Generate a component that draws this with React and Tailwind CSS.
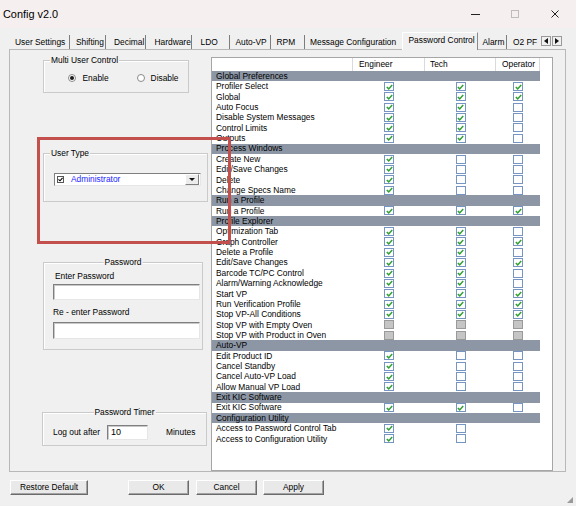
import React from 'react';

// permission matrix: 1 = checked, 0 = empty, g = disabled, - = no box
const sections = [
  {
    title: 'Global Preferences',
    rows: [
      ['Profiler Select', '111'],
      ['Global', '111'],
      ['Auto Focus', '110'],
      ['Disable System Messages', '110'],
      ['Control Limits', '110'],
      ['Outputs', '110'],
    ],
  },
  {
    title: 'Process Windows',
    rows: [
      ['Create New', '100'],
      ['Edit/Save Changes', '100'],
      ['Delete', '100'],
      ['Change Specs Name', '100'],
    ],
  },
  { title: 'Run a Profile', rows: [['Run a Profile', '111']] },
  {
    title: 'Profile Explorer',
    rows: [
      ['Optimization Tab', '110'],
      ['Graph Controller', '111'],
      ['Delete a Profile', '110'],
      ['Edit/Save Changes', '111'],
      ['Barcode TC/PC Control', '110'],
      ['Alarm/Warning Acknowledge', '110'],
      ['Start VP', '111'],
      ['Run Verification Profile', '111'],
      ['Stop VP-All Conditions', '111'],
      ['Stop VP with Empty Oven', 'ggg'],
      ['Stop VP with Product in Oven', 'ggg'],
    ],
  },
  {
    title: 'Auto-VP',
    rows: [
      ['Edit Product ID', '100'],
      ['Cancel Standby', '100'],
      ['Cancel Auto-VP Load', '100'],
      ['Allow Manual VP Load', '100'],
    ],
  },
  { title: 'Exit KIC Software', rows: [['Exit KIC Software', '110']] },
  {
    title: 'Configuration Utility',
    rows: [
      ['Access to Password Control Tab', '10-'],
      ['Access to Configuration Utility', '10-'],
    ],
  },
];

const tabs = [
  { label: 'User Settings', w: 'w-[60px]', pl: 'pl-[5px]' },
  { label: 'Shifting', w: 'w-[35.5px]', pl: 'pl-[6px]' },
  { label: 'Decimal', w: 'w-[40.5px]', pl: 'pl-[8.5px]' },
  { label: 'Hardware', w: 'w-[46px]', pl: 'pl-[8.5px]' },
  { label: 'LDO', w: 'w-[38px]', pl: 'pl-[8.5px]' },
  { label: 'Auto-VP', w: 'w-[40.5px]', pl: 'pl-[5.5px]' },
  { label: 'RPM', w: 'w-[34px]', pl: 'pl-[6px]' },
  { label: 'Message Configuration', w: 'w-[97.5px]', pl: 'pl-[5.5px]', noSep: true },
];

const Check = ({ v }) => {
  if (v === '-') return null;
  if (v === 'g') {
    return <span className="block w-[10px] h-[9px] border border-[#9a9a9a] bg-[#c5c5c5]" />;
  }
  return (
    <span className="flex items-center justify-center w-[10px] h-[9px] border border-[#7795c3] bg-white">
      {v === '1' && (
        <svg width="7" height="6" viewBox="0 0 7 6">
          <path d="M0.8 3 L2.7 4.9 L6.2 1" stroke="#33a033" strokeWidth="1.5" fill="none" />
        </svg>
      )}
    </span>
  );
};

const GroupBox = ({ label, center, className, children }) => (
  <div className={`relative border border-[#cacaca] shadow-[inset_1px_1px_0_#ffffff] ${className}`}>
    <span
      className={`absolute top-[-5px] bg-[#f0f0f0] px-[1px] ${center ? 'left-1/2 -translate-x-1/2' : 'left-[6px]'}`}
    >
      {label}
    </span>
    {children}
  </div>
);

const Radio = ({ on }) => (
  <span className="flex items-center justify-center w-[8px] h-[8px] rounded-full border border-[#8a8a8a] bg-white">
    {on && <span className="w-[4px] h-[4px] rounded-full bg-[#1a1a1a]" />}
  </span>
);

const Input = ({ className, value }) => (
  <div
    className={`bg-white border-t border-l border-[#7f7f7f] border-b border-r border-b-[#e6e6e6] border-r-[#e6e6e6] shadow-[inset_1px_1px_0_#c8c8c8] flex items-center pl-[3px] ${className}`}
  >
    {value}
  </div>
);

const Button = ({ children, className }) => (
  <div
    className={`h-[15px] flex items-center justify-center bg-[#e9e9e9] border-t border-l border-white border-b border-r border-b-[#6b6b6b] border-r-[#6b6b6b] shadow-[inset_-1px_-1px_0_#a3a3a3] ${className}`}
  >
    {children}
  </div>
);

export default function App() {
  return (
    <div className="relative w-[576px] h-[506px] overflow-hidden bg-[#f0f0f0] text-black text-[8.4px] leading-none font-['Liberation_Sans',Arial,sans-serif]">
      {/* title bar */}
      <div className="h-[28px] bg-[#f5efef] flex items-center">
        <span className="pl-[3px] text-[10.9px]">Config v2.0</span>
        <div className="ml-auto flex items-center pr-[17px]">
          <svg width="9" height="9" viewBox="0 0 9 9">
            <line x1="0" y1="4.5" x2="9" y2="4.5" stroke="#222" strokeWidth="1" />
          </svg>
          <svg width="8" height="8" viewBox="0 0 8 8" className="ml-[31px]">
            <rect x="0.5" y="0.5" width="7" height="7" stroke="#bdbdbd" fill="none" />
          </svg>
          <svg width="8" height="8" viewBox="0 0 8 8" className="ml-[32px]">
            <path d="M0.5 0.5 L7.5 7.5 M7.5 0.5 L0.5 7.5" stroke="#222" strokeWidth="1" />
          </svg>
        </div>
      </div>

      {/* tabs */}
      <div className="mt-[4px] h-[17px] pl-[10px] flex items-end whitespace-nowrap">
        {tabs.map((t) => (
          <div
            key={t.label}
            className={`h-[14px] flex items-center ${t.w} ${t.pl} ${t.noSep ? '' : 'border-r border-[#7d7d7d]'}`}
          >
            {t.label}
          </div>
        ))}
        <div className="relative z-10 -mb-px h-[18px] w-[76px] pl-[5.5px] pb-[3px] flex items-center bg-[#f0f0f0] border-l border-t border-r border-l-white border-t-white border-r-[#8a8a8a]">
          Password Control
        </div>
        <div className="h-[14px] w-[28.5px] pl-[4.5px] flex items-center border-r border-[#7d7d7d]">Alarm</div>
        <div className="h-[14px] w-[34px] pl-[6.5px] flex items-center overflow-hidden">O2 PF</div>
        <div className="h-[14px] flex items-start pt-[1px]">
          <div className="w-[10px] h-[10px] border border-[#9a9a9a] bg-[#f0f0f0] flex items-center justify-center">
            <svg width="4" height="6" viewBox="0 0 4 6"><path d="M4 0 L0 3 L4 6 Z" fill="#111" /></svg>
          </div>
          <div className="ml-[1px] w-[10px] h-[10px] border border-[#9a9a9a] bg-[#f0f0f0] flex items-center justify-center">
            <svg width="4" height="6" viewBox="0 0 4 6"><path d="M0 0 L4 3 L0 6 Z" fill="#111" /></svg>
          </div>
        </div>
      </div>

      {/* tab page */}
      <div className="ml-[9px] w-[557px] h-[423px] border border-[#b8b8b8] flex">
        <div className="w-[201px] flex flex-col">
          <GroupBox label="Multi User Control" className="mt-[10px] ml-[33px] w-[146px] h-[33px]">
            <div className="h-full flex items-center pt-[3px] pl-[24px]">
              <Radio on />
              <span className="ml-[6.5px]">Enable</span>
              <span className="ml-[28px]"><Radio /></span>
              <span className="ml-[6px]">Disable</span>
            </div>
          </GroupBox>

          <GroupBox label="User Type" className="mt-[60px] ml-[33px] w-[165px] h-[49px]">
            <div className="mt-[19px] ml-[10px] w-[147px] h-[13px] bg-white border-t border-l border-[#7f7f7f] border-b border-r border-b-[#e6e6e6] border-r-[#e6e6e6] flex items-center">
              <span className="ml-[2px] w-[7px] h-[7px] border border-[#555] bg-white flex items-center justify-center">
                <svg width="5" height="5" viewBox="0 0 5 5">
                  <path d="M0.5 2.3 L2 3.8 L4.6 0.8" stroke="#000" strokeWidth="1.1" fill="none" />
                </svg>
              </span>
              <span className="ml-[7px] text-[#2424ff]">Administrator</span>
              <div className="ml-auto mr-[1px] w-[14px] h-[11px] bg-[#ececec] border border-t-white border-l-white border-b-[#808080] border-r-[#808080] flex items-center justify-center">
                <svg width="6" height="3" viewBox="0 0 6 3"><path d="M0 0 L6 0 L3 3 Z" fill="#111" /></svg>
              </div>
            </div>
          </GroupBox>

          <GroupBox label="Password" center className="mt-[60px] ml-[33px] w-[160px] h-[88px]">
            <div className="flex flex-col pl-[9px]">
              <span className="mt-[9px] ml-[2px]">Enter Password</span>
              <Input className="mt-[4px] w-[147px] h-[16px]" />
              <span className="mt-[8px]">Re - enter Password</span>
              <Input className="mt-[5px] w-[147px] h-[17px]" />
            </div>
          </GroupBox>

          <GroupBox label="Password Timer" center className="mt-[62px] ml-[32px] w-[165px] h-[34px]">
            <div className="h-full flex items-center pt-[6px] pl-[10px]">
              <span>Log out after</span>
              <Input className="ml-[7px] w-[41px] h-[15px] text-[9px]" value="10" />
              <span className="ml-[18px]">Minutes</span>
            </div>
          </GroupBox>
        </div>

        {/* permission list */}
        <div className="mt-[7px] w-[342px] h-[414px] border border-[#a6a6a6] bg-white">
          <div className="h-[13px] flex">
            <div className="w-[141px] border-r border-[#dadada]" />
            <div className="w-[72px] pl-[6px] flex items-center border-r border-[#dadada]">Engineer</div>
            <div className="w-[71px] pl-[5px] flex items-center border-r border-[#dadada]">Tech</div>
            <div className="w-[44px] pl-[6px] flex items-center border-r border-[#dadada]">Operator</div>
          </div>
          {sections.map((s) => (
            <div key={s.title}>
              <div className="h-[10.37px] w-[328px] bg-[#8c96a5] pl-[4px] flex items-center">{s.title}</div>
              {s.rows.map(([name, v], i) => (
                <div key={name + i} className="h-[10.37px] flex items-center">
                  <div className="w-[141px] pl-[4px] whitespace-nowrap">{name}</div>
                  <div className="w-[72px] flex justify-center"><Check v={v[0]} /></div>
                  <div className="w-[71px] flex justify-center"><Check v={v[1]} /></div>
                  <div className="w-[44px] flex justify-center"><Check v={v[2]} /></div>
                </div>
              ))}
            </div>
          ))}
        </div>
      </div>

      {/* bottom buttons */}
      <div className="mt-[8px] pl-[10px] flex">
        <Button className="w-[78px]">Restore Default</Button>
        <Button className="ml-[40px] w-[61px]">OK</Button>
        <Button className="ml-[7px] w-[61px]">Cancel</Button>
        <Button className="ml-[6px] w-[61px]">Apply</Button>
      </div>

      {/* red annotation frame */}
      <div className="absolute left-[37px] top-[137px] w-[194px] h-[107px] border-[3px] border-[#c4504e] pointer-events-none" />

      {/* resize grip */}
      <svg width="6" height="6" viewBox="0 0 6 6" className="absolute right-[3px] bottom-[3px]">
        <path d="M6 0 L6 6 L0 6 Z" fill="#9a9a9a" />
      </svg>
    </div>
  );
}
